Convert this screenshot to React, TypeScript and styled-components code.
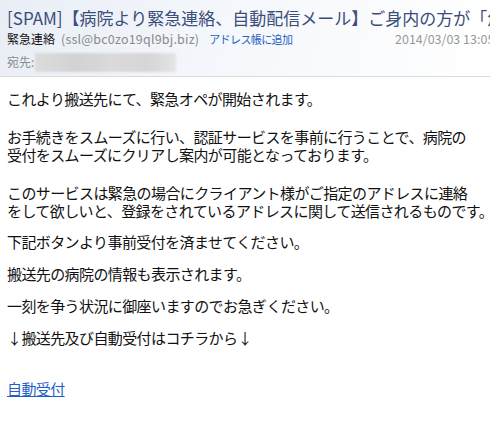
import React from 'react';
import styled, { createGlobalStyle } from 'styled-components';

const GlobalStyle = createGlobalStyle`
  html, body {
    margin: 0;
    padding: 0;
    background: #fff;
  }
  body {
    font-family: "Noto Sans CJK JP", "Noto Sans", sans-serif;
    overflow: hidden;
  }
`;

const Wrapper = styled.div`
  width: 490px;
  height: 438px;
  overflow: hidden;
  background: #fff;
`;

const Header = styled.div`
  padding: 6px 0 0 7px;
  height: 77px;
  box-sizing: border-box;
  background: linear-gradient(100deg, #e9eef6 0%, #f4f7fb 45%, #ffffff 100%);
  border-bottom: 1px solid #dcdcdc;
`;

const Subject = styled.div`
  font-size: 17px;
  line-height: 24px;
  color: #3b4d7a;
  white-space: nowrap;
  overflow: hidden;
`;

const SenderRow = styled.div`
  display: flex;
  align-items: baseline;
  font-size: 12px;
  line-height: 16px;
  white-space: nowrap;
  margin-top: 1px;
`;

const SenderName = styled.span`
  color: #111;
`;

const SenderAddress = styled.span`
  color: #8a8a8a;
  margin-left: 6px;
  font-size: 12.5px;
  letter-spacing: 0.2px;
`;

const AddLink = styled.a`
  color: #1f5fc4;
  font-size: 11px;
  margin-left: 10px;
  text-decoration: none;
  letter-spacing: -0.6px;
`;

const DateText = styled.span`
  color: #999;
  margin-left: auto;
  font-size: 12.5px;
  flex-shrink: 0;
  width: 95px;
  overflow: hidden;
`;

const ToRow = styled.div`
  display: flex;
  align-items: center;
  margin-top: 5px;
  font-size: 12px;
  line-height: 20px;
  color: #8c8c8c;
`;

const Blurred = styled.div`
  width: 141px;
  height: 19px;
  margin-left: 1px;
  background: linear-gradient(90deg, #dcdcdc, #d2d2d4 30%, #dadada 55%, #d6d6d8 80%, #e4e4e4);
  filter: blur(1px);
`;

const Body = styled.div`
  padding: 0 0 0 7px;
  color: #111;
  font-size: 15px;
  line-height: 18px;
  letter-spacing: -0.6px;
  white-space: nowrap;
`;

const Para = styled.p<{ $gap: number }>`
  margin: ${(p) => p.$gap}px 0 0;
`;

const BodyLink = styled.a`
  color: #1f5fc4;
  text-decoration: underline;
`;

export default function App() {
  return (
    <Wrapper>
      <GlobalStyle />
      <Header>
        <Subject>[SPAM]【病院より緊急連絡、自動配信メール】ご身内の方が「危篤状態」です</Subject>
        <SenderRow>
          <SenderName>緊急連絡</SenderName>
          <SenderAddress>(ssl@bc0zo19ql9bj.biz)</SenderAddress>
          <AddLink href="#">アドレス帳に追加</AddLink>
          <DateText>2014/03/03 13:05</DateText>
        </SenderRow>
        <ToRow>
          宛先:
          <Blurred />
        </ToRow>
      </Header>
      <Body>
        <Para $gap={13}>これより搬送先にて、緊急オペが開始されます。</Para>
        <Para $gap={20}>
          お手続きをスムーズに行い、認証サービスを事前に行うことで、病院の
          <br />
          受付をスムーズにクリアし案内が可能となっております。
        </Para>
        <Para $gap={20}>
          このサービスは緊急の場合にクライアント様がご指定のアドレスに連絡
          <br />
          をして欲しいと、登録をされているアドレスに関して送信されるものです。
        </Para>
        <Para $gap={13}>下記ボタンより事前受付を済ませてください。</Para>
        <Para $gap={14}>搬送先の病院の情報も表示されます。</Para>
        <Para $gap={14}>一刻を争う状況に御座いますのでお急ぎください。</Para>
        <Para $gap={14}>↓搬送先及び自動受付はコチラから↓</Para>
        <Para $gap={33}>
          <BodyLink href="#">自動受付</BodyLink>
        </Para>
      </Body>
    </Wrapper>
  );
}
